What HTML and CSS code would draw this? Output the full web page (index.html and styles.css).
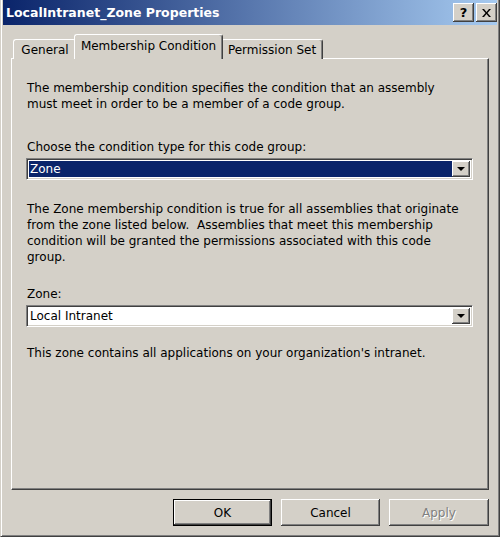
FILE: index.html
```html
<!DOCTYPE html>
<html lang="en">
  <head>
    <meta charset="UTF-8" />
    <title>LocalIntranet_Zone Properties</title>
    <link rel="stylesheet" href="styles.css">
  </head>
  <body>
    <div class="window">
      <div class="titlebar">
        <span class="title">LocalIntranet_Zone Properties</span>
        <div class="caption-buttons">
          <button class="caption-btn help">?</button>
          <button class="caption-btn close">
            <svg width="9" height="8" viewBox="0 0 9 8">
              <path d="M0 0h2l2.5 3 2.5-3h2L5.5 4 9 8H7L4.5 5 2 8H0l3.5-4z" fill="#000" />
            </svg>
          </button>
        </div>
      </div>

      <div class="content">
        <div class="tabs">
          <div class="tab tab-general">General</div>
          <div class="tab tab-membership active">Membership Condition</div>
          <div class="tab tab-permission">Permission Set</div>
        </div>

        <div class="panel">
          <p class="text">
            The membership condition specifies the condition that an assembly<br />
            must meet in order to be a member of a code group.
          </p>

          <p class="label">Choose the condition type for this code group:</p>
          <div class="combo selected">
            <span class="combo-value">Zone</span>
            <span class="combo-arrow"><span class="arrow"></span></span>
          </div>

          <p class="text second">
            The Zone membership condition is true for all assemblies that originate<br />
            from the zone listed below.&nbsp; Assemblies that meet this membership<br />
            condition will be granted the permissions associated with this code<br />
            group.
          </p>

          <p class="label">Zone:</p>
          <div class="combo">
            <span class="combo-value">Local Intranet</span>
            <span class="combo-arrow"><span class="arrow"></span></span>
          </div>

          <p class="text note">This zone contains all applications on your organization's intranet.</p>
        </div>

        <div class="actions">
          <button class="btn default">OK</button>
          <button class="btn">Cancel</button>
          <button class="btn disabled">Apply</button>
        </div>
      </div>
    </div>
  </body>
</html>
```

FILE: styles.css
```css
* {
  margin: 0;
  padding: 0;
  box-sizing: border-box;
}

body {
  background: #d4d0c8;
  font-family: "DejaVu Sans", Verdana, sans-serif;
  font-size: 12px;
  color: #000;
}

.window {
  width: 500px;
  height: 537px;
  background: #d4d0c8;
  border-left: 1px solid #d4d0c8;
  border-right: 1px solid #404040;
  border-bottom: 1px solid #404040;
  padding: 0 2px 2px 2px;
  box-shadow: inset 1px 0 #fff, inset -1px -1px #808080;
}

.titlebar {
  height: 25px;
  display: flex;
  align-items: center;
  justify-content: space-between;
  background: linear-gradient(to right, #0a246a, #a6caf0);
  padding: 0 0 0 3px;
}

.title {
  color: #fff;
  font-weight: bold;
  font-size: 12.5px;
}

.caption-buttons {
  display: flex;
  gap: 2px;
}

.caption-btn {
  width: 21px;
  height: 19px;
  background: #d4d0c8;
  border: none;
  box-shadow: inset -1px -1px #404040, inset 1px 1px #fff, inset -2px -2px #808080;
  display: flex;
  align-items: center;
  justify-content: center;
  font-family: "DejaVu Sans", sans-serif;
  font-weight: bold;
  font-size: 13px;
  color: #000;
}

.content {
  padding: 0 8px 0 8px;
}

.tabs {
  display: flex;
  align-items: flex-end;
  height: 34px;
  padding-left: 2px;
  position: relative;
  z-index: 1;
  margin-bottom: -1px;
}

.tab {
  height: 20px;
  background: #d4d0c8;
  border-top: 1px solid #fff;
  border-left: 1px solid #fff;
  border-right: 1px solid #404040;
  border-radius: 3px 3px 0 0;
  box-shadow: inset -1px 0 #808080;
  display: flex;
  align-items: center;
  justify-content: center;
  padding-top: 1px;
}

.tab-general {
  width: 63px;
  border-right: none;
  box-shadow: none;
}

.tab-membership {
  width: 145px;
}

.tab-permission {
  width: 102px;
}

.tab.active {
  height: 25px;
  width: 149px;
  margin: 0 -2px;
  position: relative;
  z-index: 2;
  padding-top: 0;
  padding-bottom: 3px;
}

.panel {
  width: 478px;
  height: 432px;
  border-top: 1px solid #fff;
  border-left: 1px solid #fff;
  border-right: 1px solid #404040;
  border-bottom: 1px solid #404040;
  box-shadow: inset -1px -1px #808080;
  padding: 21px 14px 0 14px;
  line-height: 16px;
}

.text {
  padding-left: 1px;
}

.label {
  margin-top: 27px;
  padding-left: 1px;
}

.second {
  margin-top: 21px;
}

.second + .label {
  margin-top: 21px;
}

.note {
  margin-top: 18px;
}

.combo {
  margin-top: 3px;
  width: 447px;
  height: 22px;
  background: #fff;
  border-top: 1px solid #808080;
  border-left: 1px solid #808080;
  border-right: 1px solid #fff;
  border-bottom: 1px solid #fff;
  box-shadow: inset 1px 1px #404040, inset -1px -1px #d4d0c8;
  display: flex;
  align-items: stretch;
  padding: 2px;
}

.combo-value {
  flex: 1;
  display: flex;
  align-items: center;
  padding-left: 1px;
}

.combo.selected .combo-value {
  background: #0a246a;
  color: #fff;
}

.combo-arrow {
  width: 18px;
  background: #d4d0c8;
  box-shadow: inset -1px -1px #404040, inset 1px 1px #fff, inset -2px -2px #808080;
  display: flex;
  align-items: center;
  justify-content: center;
}

.arrow {
  width: 0;
  height: 0;
  border-left: 4px solid transparent;
  border-right: 4px solid transparent;
  border-top: 4px solid #000;
}

.actions {
  display: flex;
  justify-content: flex-end;
  gap: 9px;
  margin-top: 9px;
}

.btn {
  width: 99px;
  height: 27px;
  background: #d4d0c8;
  border: none;
  font-family: "DejaVu Sans", Verdana, sans-serif;
  font-size: 12px;
  color: #000;
  box-shadow: inset -1px -1px #404040, inset 1px 1px #fff, inset -2px -2px #808080;
}

.btn.default {
  border: 1px solid #000;
}

.btn.disabled {
  width: 100px;
  color: #808080;
  text-shadow: 1px 1px #fff;
}
```
